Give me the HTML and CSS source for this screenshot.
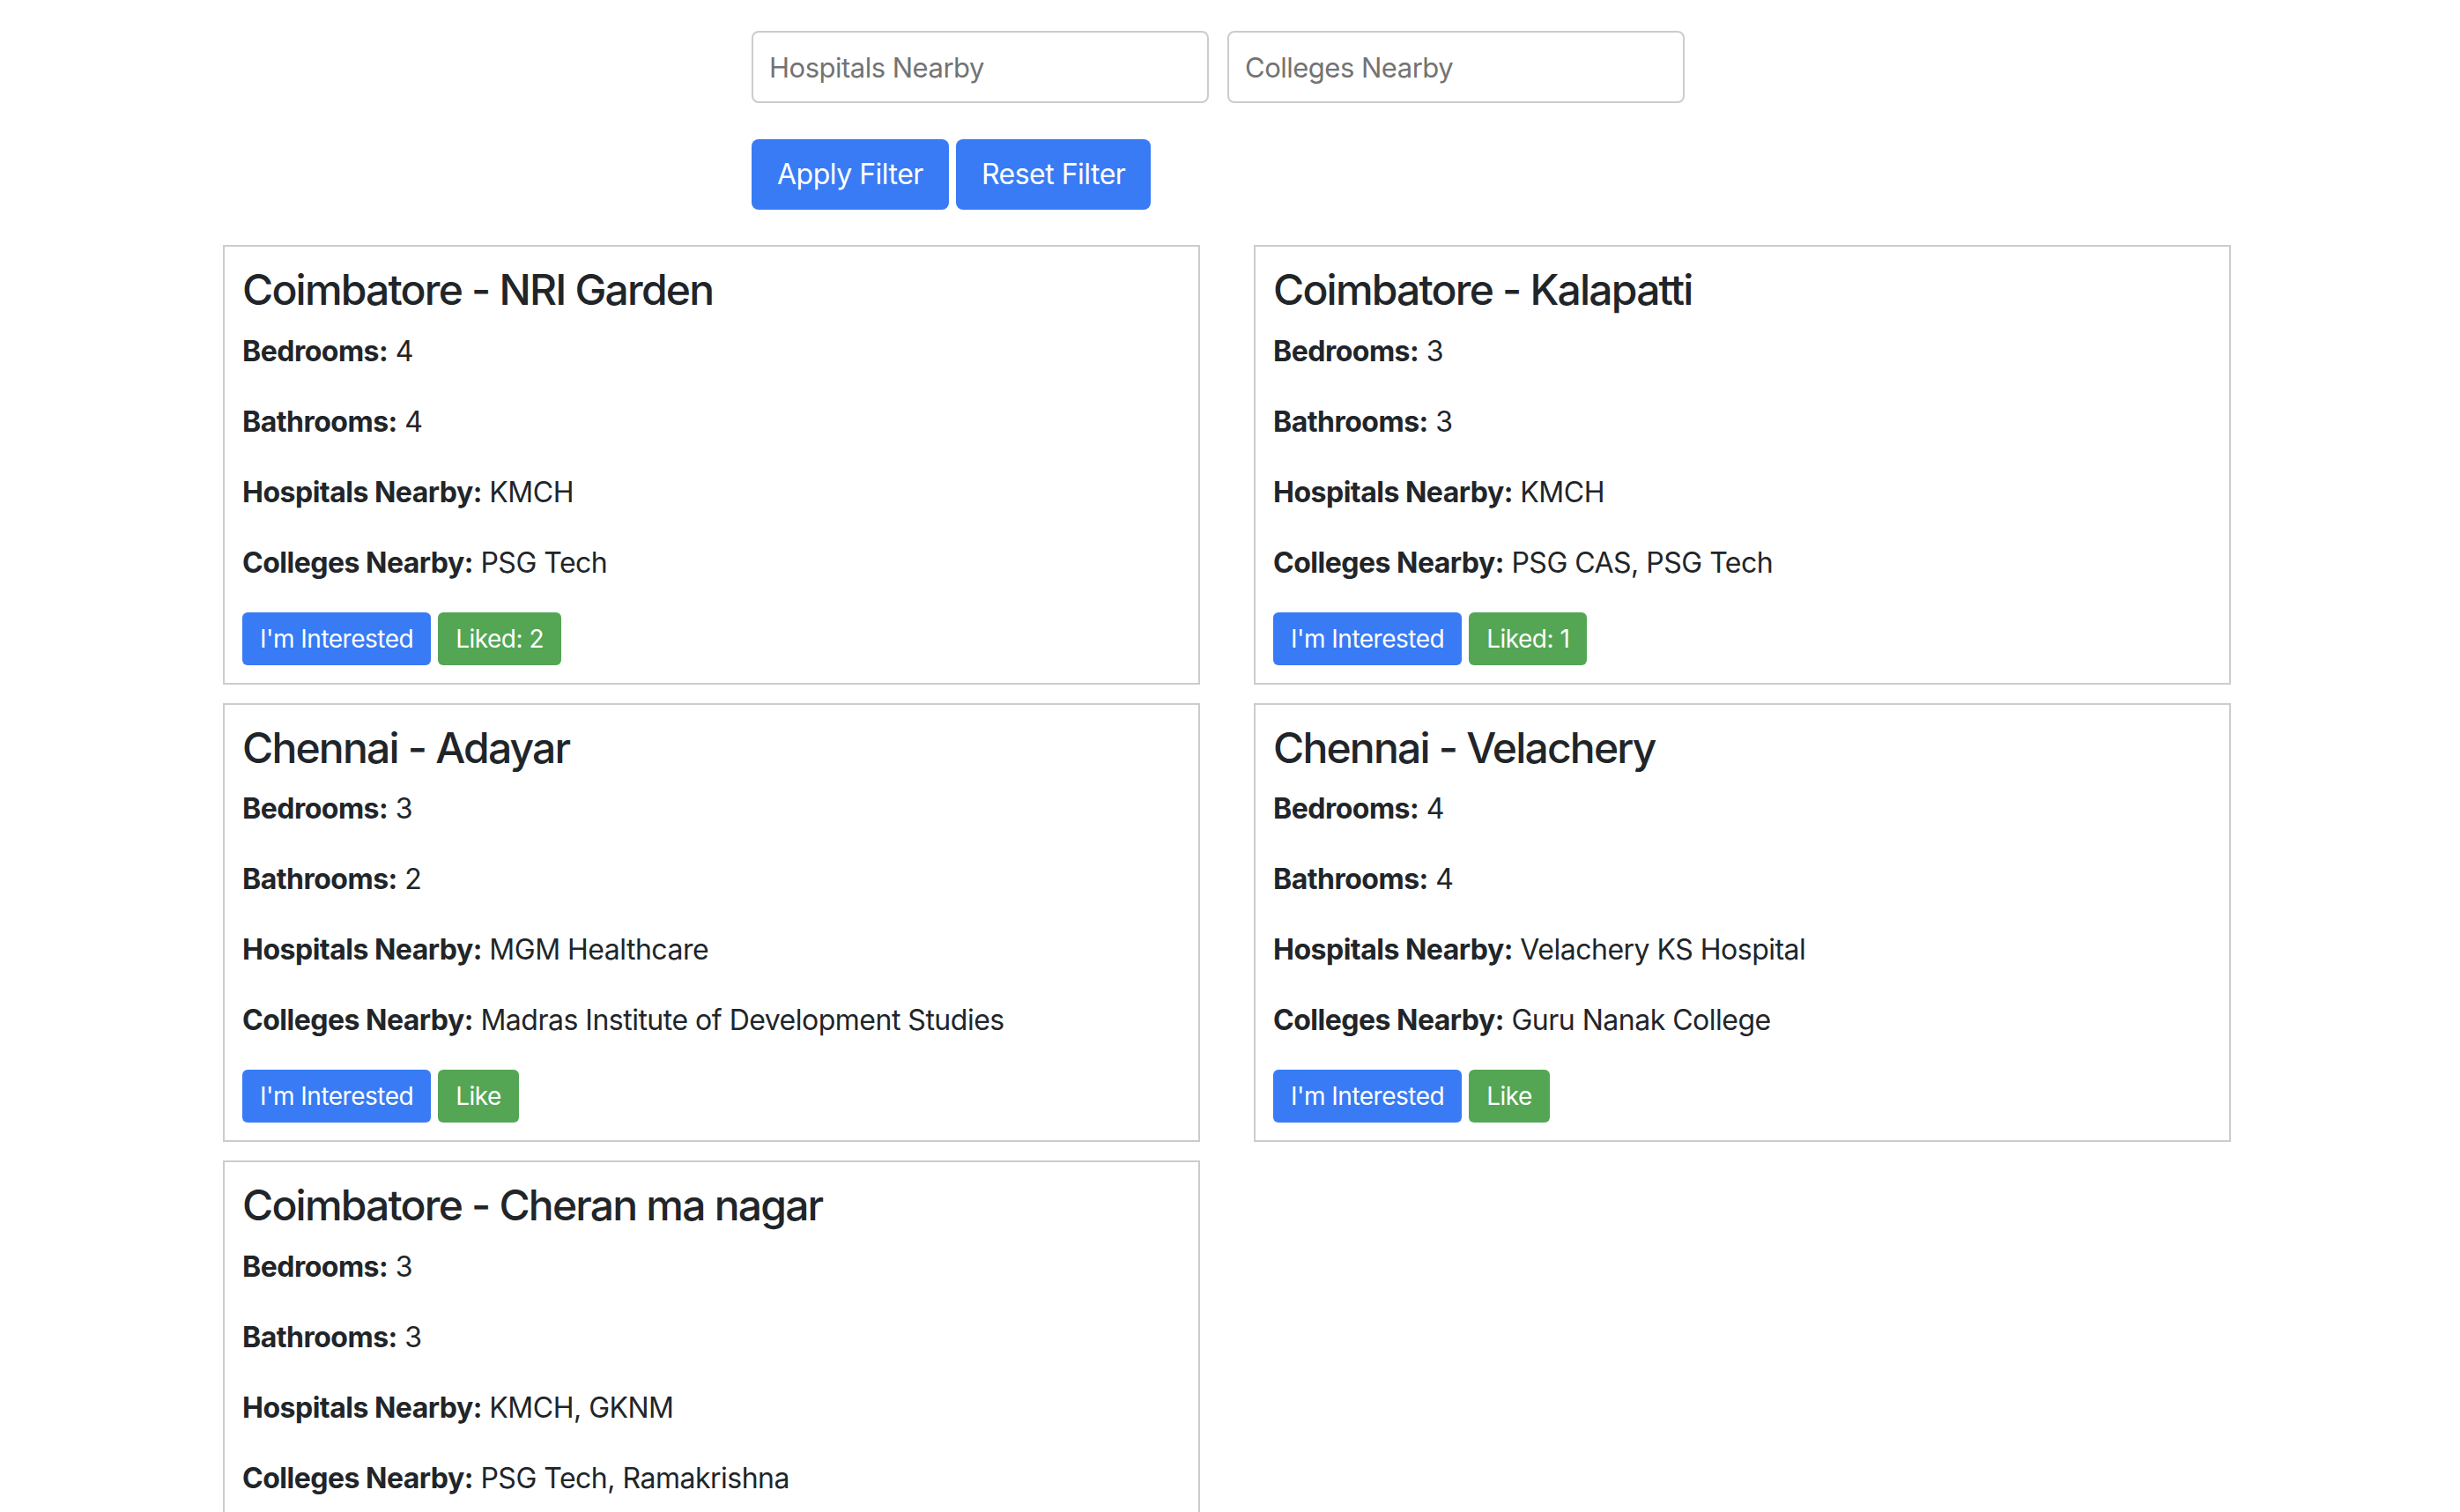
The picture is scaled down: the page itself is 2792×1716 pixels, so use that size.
FILE: index.html
```html
<!DOCTYPE html>
<html lang="en">
<head>
<meta charset="utf-8">
<title>Properties</title>
<link rel="stylesheet" href="styles.css">
</head>
<body>
<div class="filters">
  <div class="filter-inputs">
    <input class="field" type="text" placeholder="Hospitals Nearby">
    <input class="field" type="text" placeholder="Colleges Nearby">
  </div>
  <div class="filter-actions">
    <button class="btn btn-filter">Apply Filter</button>
    <button class="btn btn-filter">Reset Filter</button>
  </div>
</div>

<div class="grid">
  <div class="card">
    <h3 class="card-title">Coimbatore - NRI Garden</h3>
    <p class="line"><strong>Bedrooms:</strong> 4</p>
    <p class="line"><strong>Bathrooms:</strong> 4</p>
    <p class="line"><strong>Hospitals Nearby:</strong> KMCH</p>
    <p class="line"><strong>Colleges Nearby:</strong> PSG Tech</p>
    <div class="card-actions">
      <button class="btn btn-sm btn-blue">I'm Interested</button>
      <button class="btn btn-sm btn-green">Liked: 2</button>
    </div>
  </div>
  <div class="card">
    <h3 class="card-title">Coimbatore - Kalapatti</h3>
    <p class="line"><strong>Bedrooms:</strong> 3</p>
    <p class="line"><strong>Bathrooms:</strong> 3</p>
    <p class="line"><strong>Hospitals Nearby:</strong> KMCH</p>
    <p class="line"><strong>Colleges Nearby:</strong> PSG CAS, PSG Tech</p>
    <div class="card-actions">
      <button class="btn btn-sm btn-blue">I'm Interested</button>
      <button class="btn btn-sm btn-green">Liked: 1</button>
    </div>
  </div>
  <div class="card">
    <h3 class="card-title">Chennai - Adayar</h3>
    <p class="line"><strong>Bedrooms:</strong> 3</p>
    <p class="line"><strong>Bathrooms:</strong> 2</p>
    <p class="line"><strong>Hospitals Nearby:</strong> MGM Healthcare</p>
    <p class="line"><strong>Colleges Nearby:</strong> Madras Institute of Development Studies</p>
    <div class="card-actions">
      <button class="btn btn-sm btn-blue">I'm Interested</button>
      <button class="btn btn-sm btn-green">Like</button>
    </div>
  </div>
  <div class="card">
    <h3 class="card-title">Chennai - Velachery</h3>
    <p class="line"><strong>Bedrooms:</strong> 4</p>
    <p class="line"><strong>Bathrooms:</strong> 4</p>
    <p class="line"><strong>Hospitals Nearby:</strong> Velachery KS Hospital</p>
    <p class="line"><strong>Colleges Nearby:</strong> Guru Nanak College</p>
    <div class="card-actions">
      <button class="btn btn-sm btn-blue">I'm Interested</button>
      <button class="btn btn-sm btn-green">Like</button>
    </div>
  </div>
  <div class="card">
    <h3 class="card-title">Coimbatore - Cheran ma nagar</h3>
    <p class="line"><strong>Bedrooms:</strong> 3</p>
    <p class="line"><strong>Bathrooms:</strong> 3</p>
    <p class="line"><strong>Hospitals Nearby:</strong> KMCH, GKNM</p>
    <p class="line"><strong>Colleges Nearby:</strong> PSG Tech, Ramakrishna</p>
    <div class="card-actions">
      <button class="btn btn-sm btn-blue">I'm Interested</button>
      <button class="btn btn-sm btn-green">Like</button>
    </div>
  </div>
</div>
</body>
</html>
```

FILE: styles.css
```css
* { box-sizing: border-box; }

body {
  margin: 0;
  background: #ffffff;
  color: #212529;
  font-family: Inter, "Noto Sans", "Liberation Sans", sans-serif;
  font-size: 32px;
  line-height: 48px;
  letter-spacing: -0.5px;
}

.filters {
  padding-top: 35px;
  margin-left: 853px;
}

.filter-inputs {
  display: flex;
  gap: 21px;
}

.field {
  width: 519px;
  height: 82px;
  padding: 0 18px;
  border: 2px solid #cccccc;
  border-radius: 8px;
  font-family: inherit;
  font-size: 31px;
  letter-spacing: -0.5px;
  color: #212529;
  background: #fff;
  outline: none;
}

.field::placeholder {
  color: #737373;
}

.filter-actions {
  display: flex;
  gap: 8px;
  margin-top: 41px;
}

.btn {
  font-family: inherit;
  letter-spacing: -0.5px;
  color: #ffffff;
  border: 2px solid transparent;
  cursor: pointer;
}

.btn-filter {
  background: #387bf5;
  font-size: 32px;
  line-height: 48px;
  padding: 14px 27px;
  border-radius: 8px;
}

.grid {
  display: grid;
  grid-template-columns: 1109px 1109px;
  column-gap: 61px;
  row-gap: 21px;
  margin-top: 40px;
  margin-left: 253px;
}

.card {
  border: 2px solid #cccccc;
  padding: 20px;
}

.card-title {
  margin: 0 0 17px;
  font-size: 48px;
  font-weight: 500;
  line-height: 57.6px;
  letter-spacing: -1.8px;
}

.line {
  margin: 0 0 32px;
}

.line strong {
  font-weight: 700;
}

.card-actions {
  display: flex;
  gap: 8px;
}

.btn-sm {
  font-size: 28px;
  line-height: 42px;
  padding: 7px 18px;
  border-radius: 6px;
}

.btn-blue { background: #387bf5; }
.btn-green { background: #54a654; }
```
